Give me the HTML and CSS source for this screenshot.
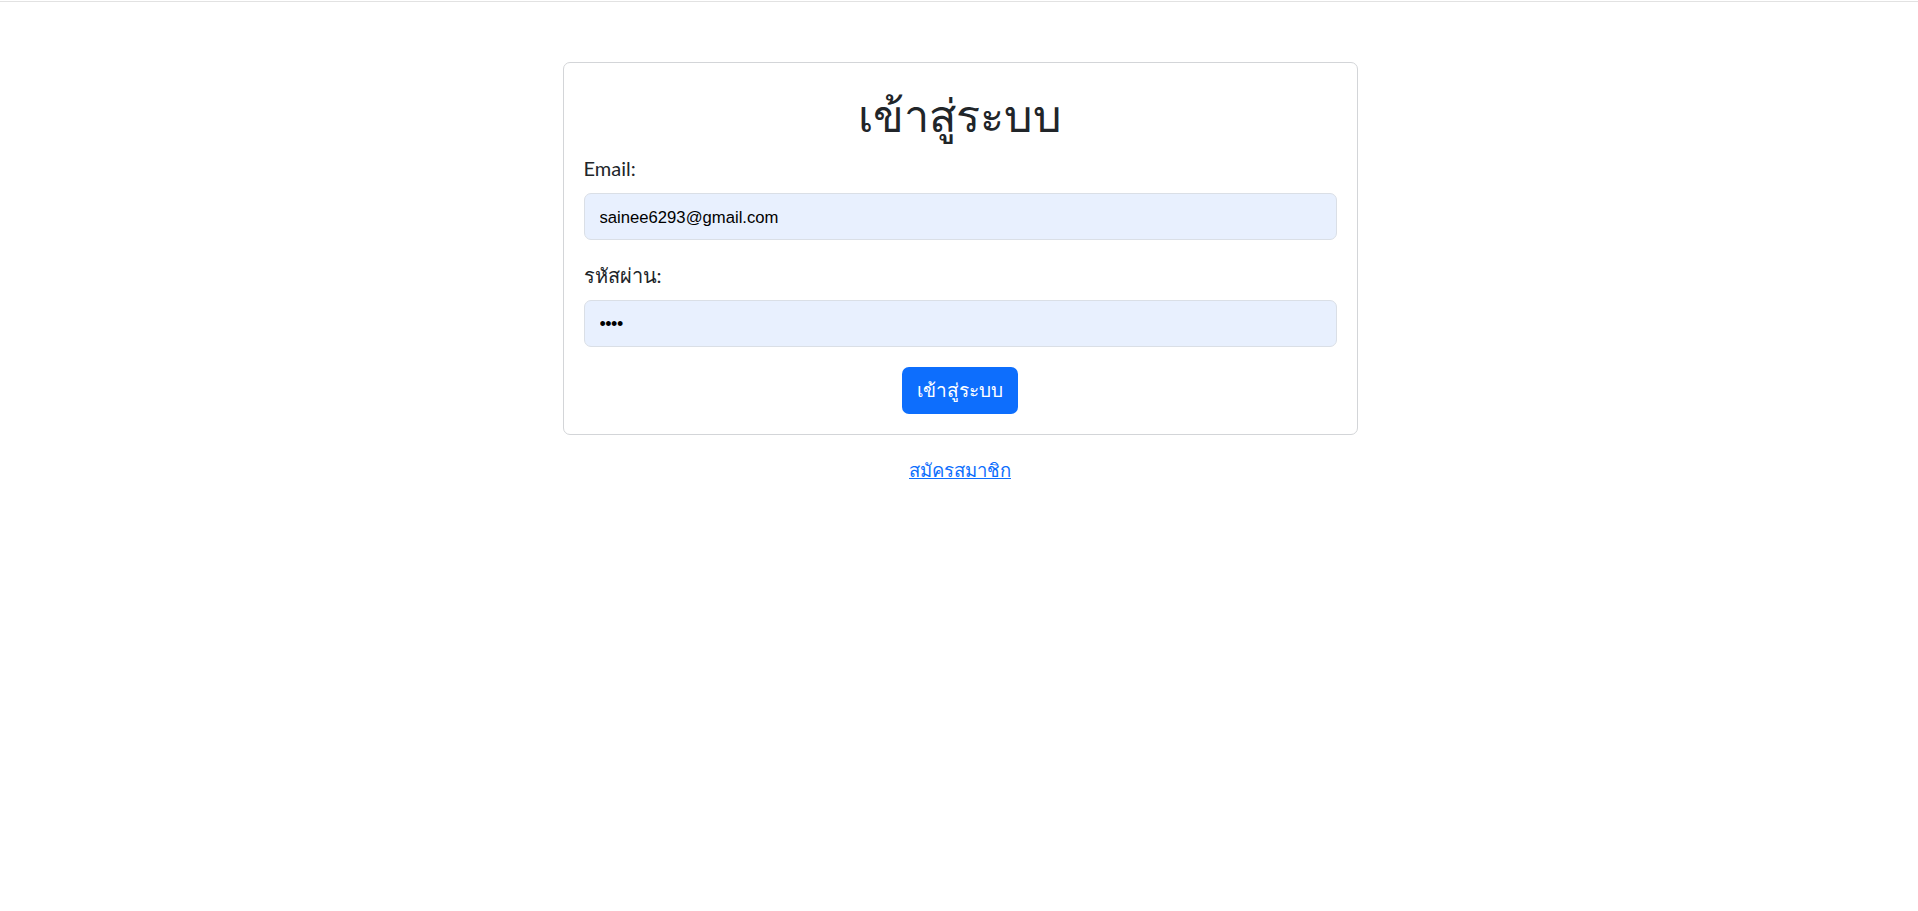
FILE: index.html
```html
<!DOCTYPE html>
<html lang="th">
<head>
<meta charset="utf-8">
<title>เข้าสู่ระบบ</title>
<link rel="stylesheet" href="styles.css">
</head>
<body>
<div class="topline"></div>
<main class="wrap">
  <form class="card">
    <h1 class="title">เข้าสู่ระบบ</h1>
    <div class="field">
      <label class="label" for="email">Email:</label>
      <input class="input" id="email" type="text" value="sainee6293@gmail.com">
    </div>
    <div class="field">
      <label class="label" for="pw">รหัสผ่าน:</label>
      <input class="input pw" id="pw" type="password" value="1234">
    </div>
    <div class="actions">
      <button class="btn" type="button">เข้าสู่ระบบ</button>
    </div>
  </form>
  <div class="register"><a href="#" class="link">สมัครสมาชิก</a></div>
</main>
</body>
</html>
```

FILE: styles.css
```css
* { box-sizing: border-box; }
html, body { margin: 0; padding: 0; background: #fff; }
body {
  font-family: "Lato", "Noto Sans", sans-serif;
  font-size: 20px;
  line-height: 1.5;
  color: #212529;
}
.topline {
  height: 1px;
  margin-top: 1px;
  background: #e2e2e2;
}
.wrap {
  width: 795px;
  margin: 60px auto 0;
  position: relative;
  left: 1px;
}
.card {
  border: 1px solid #d3d5d8;
  border-radius: 7px;
  padding: 20px;
  display: flex;
  flex-direction: column;
}
.title {
  margin: 0 0 8px;
  padding-top: 2px;
  font-size: 45px;
  font-weight: 500;
  line-height: 60px;
  text-align: center;
  color: #212529;
}
.field {
  display: flex;
  flex-direction: column;
  margin-bottom: 20px;
}
.label {
  margin-bottom: 10px;
  line-height: 30px;
}
.input {
  height: 47px;
  padding: 3px 15px 0;
  border: 1px solid #dadfe6;
  border-radius: 7px;
  background: #e8f0fe;
  font-family: "Liberation Sans", Arial, sans-serif;
  font-size: 16.67px;
  color: #000;
  outline: none;
}
.pw { font-size: 18px; letter-spacing: -0.5px; padding-top: 1px; }
.actions {
  display: flex;
  justify-content: center;
}
.btn {
  height: 47px;
  padding: 0 15px;
  border: none;
  border-radius: 7px;
  background: #0d6efd;
  color: #fff;
  font-family: "Lato", "Noto Sans", sans-serif;
  font-size: 19px;
  font-weight: 500;
  line-height: 1.5;
}
.register {
  margin-top: 20px;
  text-align: center;
  line-height: 30px;
  font-size: 18.5px;
}
.link {
  color: #0d6efd;
  text-decoration: underline;
}
```
